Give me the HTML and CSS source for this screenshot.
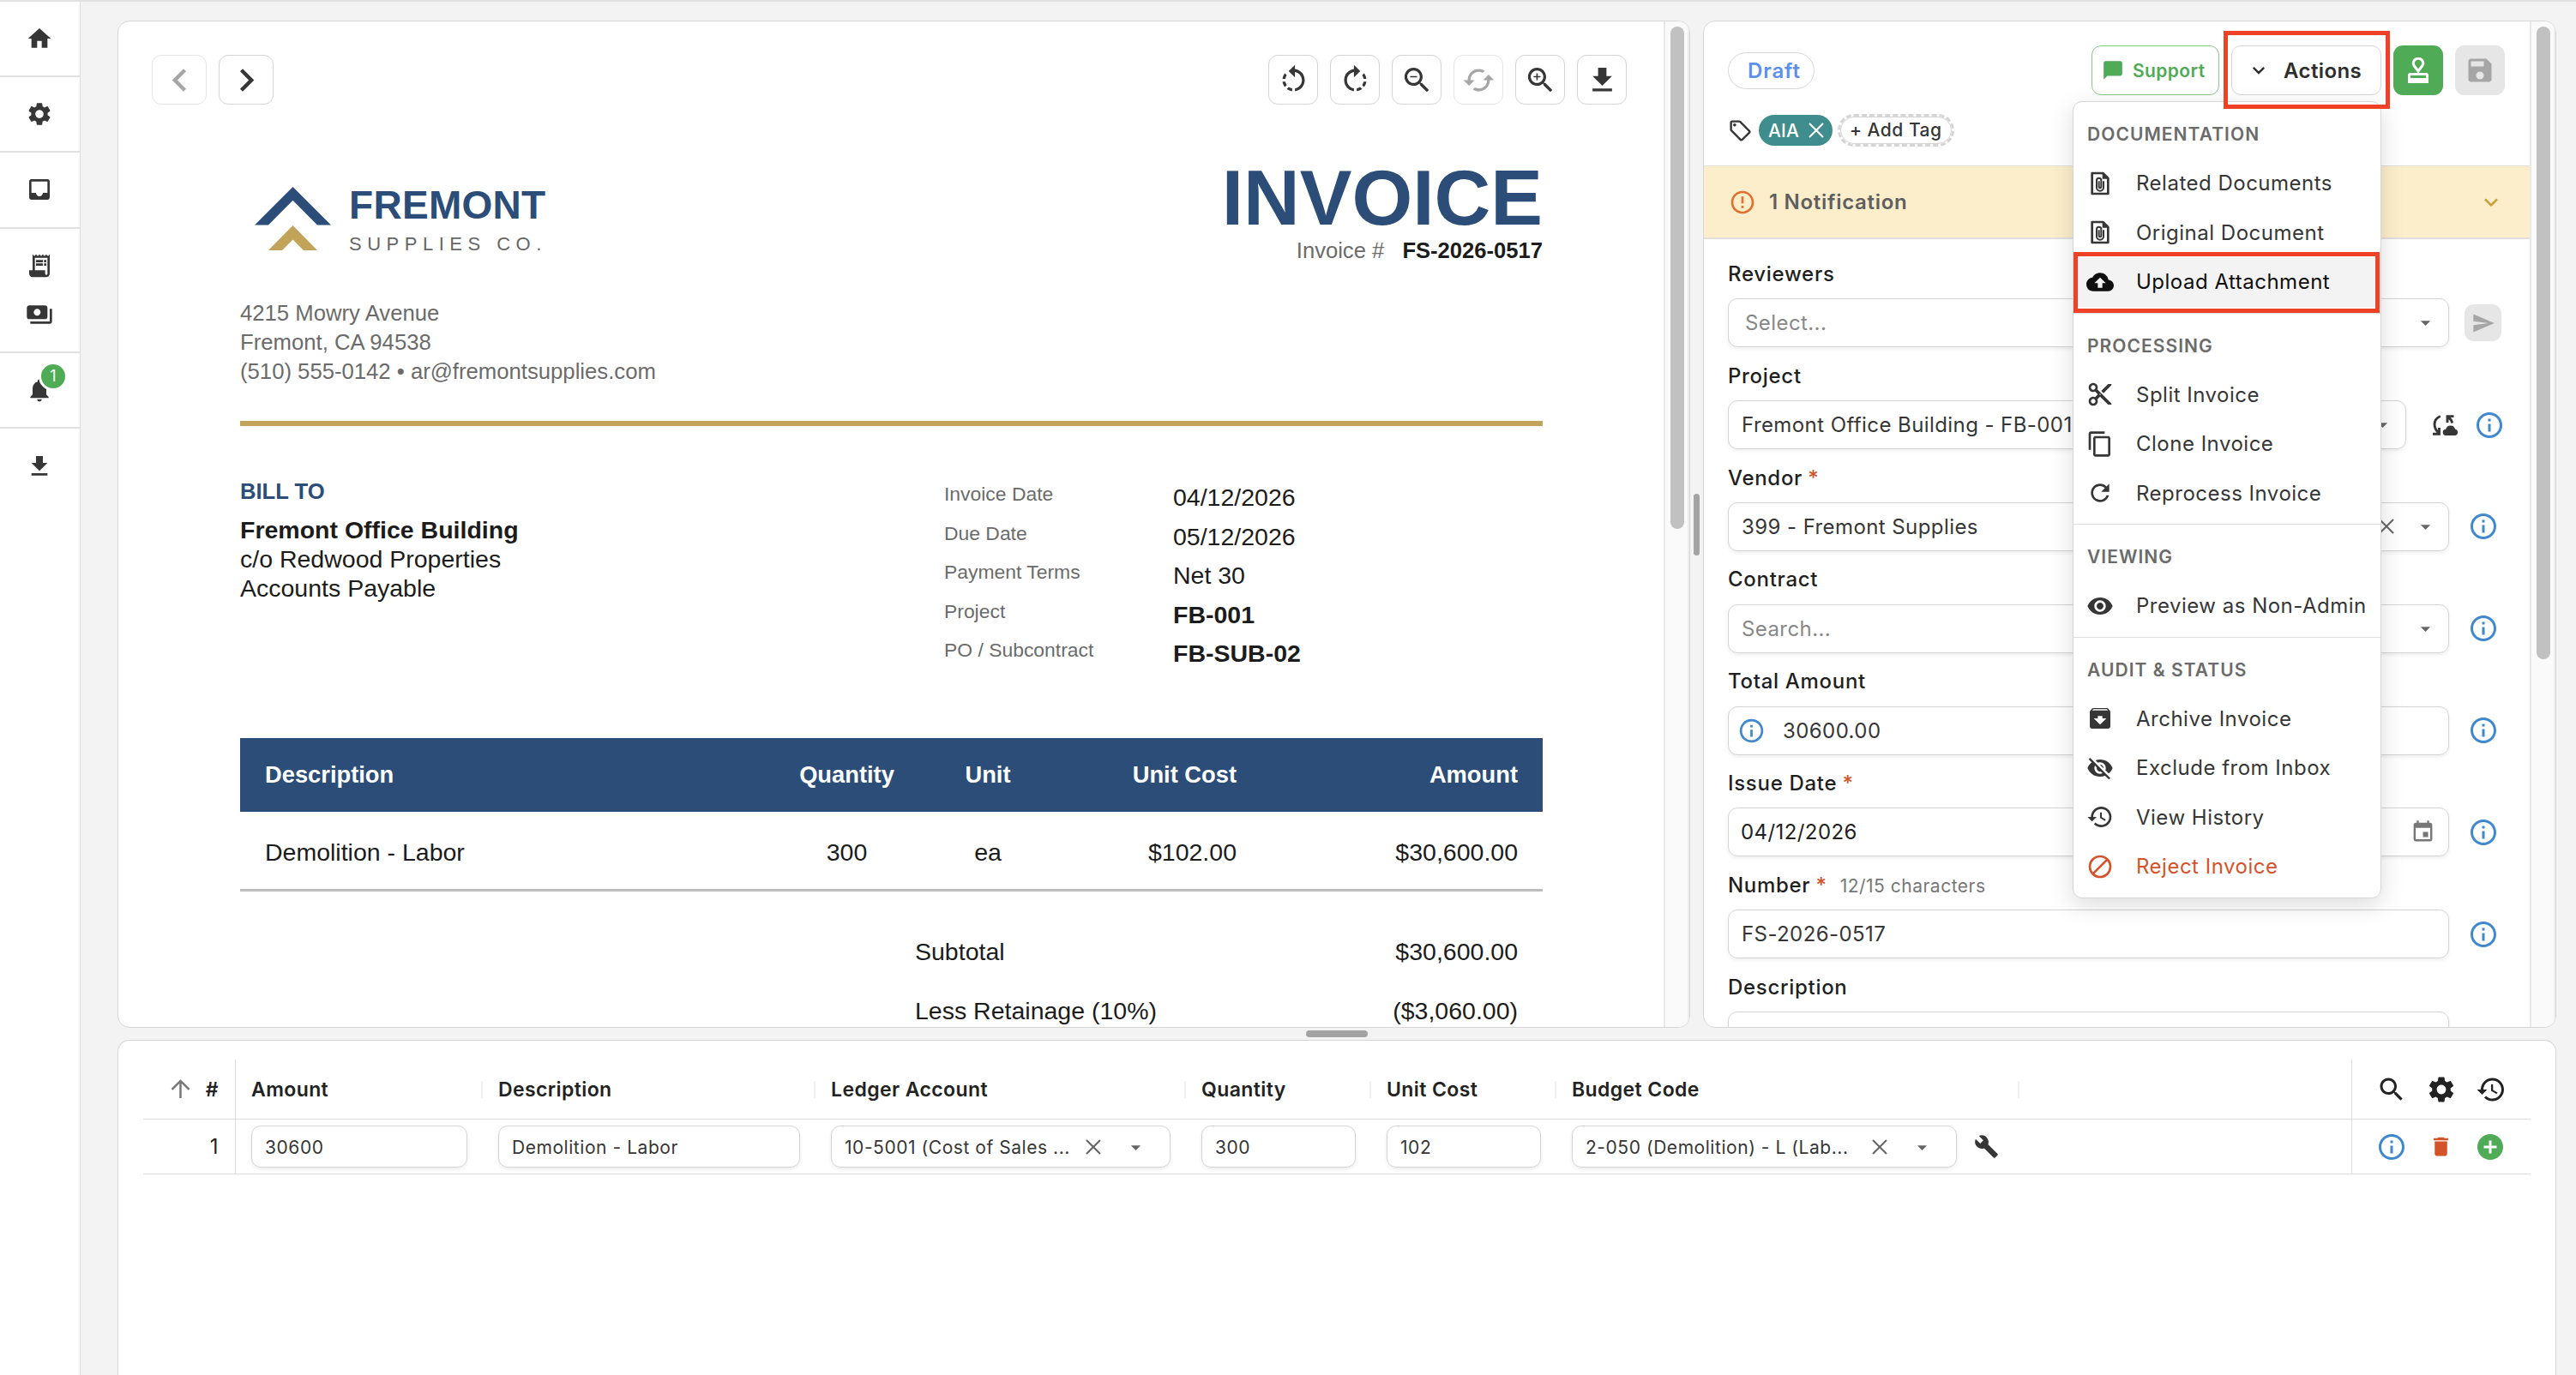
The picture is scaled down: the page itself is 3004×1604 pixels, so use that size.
FILE: index.html
```html
<!DOCTYPE html>
<html lang="en">
<head>
    <meta charset="UTF-8">
    <meta name="viewport" content="width=device-width, initial-scale=1.0">
    <title>Invoice FS-2026-0517</title>
    <link rel="stylesheet" href="styles.css">
</head>
<body>
    <!-- icon sprite -->
    <svg class="sprite" xmlns="http://www.w3.org/2000/svg">
        <symbol id="i-home" viewBox="0 0 24 24"><path d="M10 20v-6h4v6h5v-8h3L12 3 2 12h3v8z"/></symbol>
        <symbol id="i-gear" viewBox="0 0 24 24"><path d="M19.14 12.94c.04-.3.06-.61.06-.94 0-.32-.02-.64-.07-.94l2.03-1.58c.18-.14.23-.41.12-.61l-1.92-3.32c-.12-.22-.37-.29-.59-.22l-2.39.96c-.5-.38-1.03-.7-1.62-.94l-.36-2.54c-.04-.24-.24-.41-.48-.41h-3.84c-.24 0-.43.17-.47.41l-.36 2.54c-.59.24-1.13.57-1.62.94l-2.39-.96c-.22-.08-.47 0-.59.22L2.74 8.87c-.12.21-.08.47.12.61l2.03 1.58c-.05.3-.09.63-.09.94s.02.64.07.94l-2.03 1.58c-.18.14-.23.41-.12.61l1.92 3.32c.12.22.37.29.59.22l2.39-.96c.5.38 1.03.7 1.62.94l.36 2.54c.05.24.24.41.48.41h3.84c.24 0 .44-.17.47-.41l.36-2.54c.59-.24 1.13-.56 1.62-.94l2.39.96c.22.08.47 0 .59-.22l1.92-3.32c.12-.22.07-.47-.12-.61l-2.01-1.58zM12 15.6c-1.98 0-3.6-1.62-3.6-3.6s1.62-3.6 3.6-3.6 3.6 1.62 3.6 3.6-1.62 3.6-3.6 3.6z"/></symbol>
        <symbol id="i-inbox" viewBox="0 0 24 24"><path d="M19 3H4.99c-1.11 0-1.98.89-1.98 2L3 19c0 1.1.88 2 1.99 2H19c1.1 0 2-.9 2-2V5c0-1.11-.9-2-2-2zm0 12h-4c0 1.66-1.35 3-3 3s-3-1.34-3-3H4.99V5H19v10z"/></symbol>
        <symbol id="i-receipt" viewBox="0 0 24 24"><path d="M19.5 3.5 18 2l-1.5 1.5L15 2l-1.5 1.5L12 2l-1.5 1.5L9 2 7.5 3.5 6 2v14H3v3c0 1.66 1.34 3 3 3h12c1.66 0 3-1.34 3-3V2l-1.5 1.5zM19 19c0 .55-.45 1-1 1s-1-.45-1-1v-3H8V5h11v14z"/><path d="M9 7h6v2H9zM16 7h2v2h-2zM9 10h6v2H9zM16 10h2v2h-2z"/></symbol>
        <symbol id="i-payments" viewBox="0 0 24 24"><path d="M19 14V6c0-1.1-.9-2-2-2H3c-1.1 0-2 .9-2 2v8c0 1.1.9 2 2 2h14c1.1 0 2-.9 2-2zm-9-1c-1.66 0-3-1.34-3-3s1.34-3 3-3 3 1.34 3 3-1.34 3-3 3zm13-6v11c0 1.1-.9 2-2 2H4v-2h17V7h2z"/></symbol>
        <symbol id="i-bell" viewBox="0 0 24 24"><path d="M12 22c1.1 0 2-.9 2-2h-4c0 1.1.89 2 2 2zm6-6v-5c0-3.07-1.64-5.64-4.5-6.32V4c0-.83-.67-1.5-1.5-1.5s-1.5.67-1.5 1.5v.68C7.63 5.36 6 7.92 6 11v5l-2 2v1h16v-1l-2-2z"/></symbol>
        <symbol id="i-download" viewBox="0 0 24 24"><path d="M19 9h-4V3H9v6H5l7 7 7-7zM5 18v2h14v-2H5z"/></symbol>
        <symbol id="i-left" viewBox="0 0 24 24"><path d="M15.41 7.41 14 6l-6 6 6 6 1.41-1.41L10.83 12z"/></symbol>
        <symbol id="i-right" viewBox="0 0 24 24"><path d="M10 6 8.59 7.41 13.17 12l-4.58 4.59L10 18l6-6z"/></symbol>
        <symbol id="i-down" viewBox="0 0 24 24"><path d="M7.41 8.59 12 13.17l4.59-4.58L18 10l-6 6-6-6z"/></symbol>
        <symbol id="i-caret" viewBox="0 0 24 24"><path d="m7 10 5 5 5-5z"/></symbol>
        <symbol id="i-close" viewBox="0 0 24 24"><path d="M4 4l16 16M20 4L4 20" fill="none" stroke="currentColor" stroke-width="2.1"/></symbol>
        <symbol id="i-rot-left" viewBox="0 0 24 24"><path d="M7.11 8.53 5.7 7.11C4.8 8.27 4.24 9.61 4.07 11h2.02c.14-.87.49-1.72 1.02-2.47zM6.09 13H4.07c.17 1.39.72 2.73 1.62 3.89l1.41-1.42c-.52-.75-.87-1.59-1.01-2.47zm1.01 5.32c1.16.9 2.51 1.44 3.9 1.61V17.9c-.87-.15-1.71-.49-2.46-1.03L7.1 18.32zM13 4.07V1L8.45 5.55 13 10V6.09c2.84.48 5 2.94 5 5.91s-2.16 5.43-5 5.91v2.02c3.95-.49 7-3.85 7-7.93s-3.05-7.44-7-7.93z"/></symbol>
        <symbol id="i-rot-right" viewBox="0 0 24 24"><path d="M15.55 5.55 11 1v3.07C7.06 4.56 4 7.92 4 12s3.05 7.44 7 7.93v-2.02c-2.84-.48-5-2.94-5-5.91s2.16-5.43 5-5.91V10l4.55-4.45zM19.93 11c-.17-1.39-.72-2.73-1.62-3.89l-1.42 1.42c.54.75.88 1.6 1.02 2.47h2.02zM13 17.9v2.02c1.39-.17 2.74-.71 3.9-1.61l-1.44-1.44c-.75.54-1.59.89-2.46 1.03zm3.89-2.42 1.42 1.41c.9-1.16 1.45-2.5 1.62-3.89h-2.02c-.14.87-.48 1.72-1.02 2.48z"/></symbol>
        <symbol id="i-search" viewBox="0 0 24 24"><path d="M15.5 14h-.79l-.28-.27C15.41 12.59 16 11.11 16 9.5 16 5.91 13.09 3 9.5 3S3 5.91 3 9.5 5.91 16 9.5 16c1.61 0 3.09-.59 4.23-1.57l.27.28v.79l5 4.99L20.49 19l-4.99-5zm-6 0C7.01 14 5 11.99 5 9.5S7.01 5 9.5 5 14 7.01 14 9.5 11.99 14 9.5 14z"/></symbol>
        <symbol id="i-cached" viewBox="0 0 24 24"><path d="m19 8-4 4h3c0 3.31-2.69 6-6 6-1.01 0-1.97-.25-2.8-.7l-1.46 1.46C8.97 19.54 10.43 20 12 20c4.42 0 8-3.58 8-8h3l-4-4zM6 12c0-3.31 2.69-6 6-6 1.01 0 1.97.25 2.8.7l1.46-1.46C15.03 4.46 13.57 4 12 4c-4.42 0-8 3.58-8 8H1l4 4 4-4H6z"/></symbol>
        <symbol id="i-tag" viewBox="0 0 24 24"><path d="m21.41 11.58-9-9C12.05 2.22 11.55 2 11 2H4c-1.1 0-2 .9-2 2v7c0 .55.22 1.05.59 1.42l9 9c.36.36.86.58 1.41.58s1.05-.22 1.41-.59l7-7c.37-.36.59-.86.59-1.41s-.23-1.06-.59-1.42zM13 20.01 4 11V4h7v-.01l9 9-7 7.02z"/><circle cx="6.5" cy="6.5" r="1.5"/></symbol>
        <symbol id="i-error" viewBox="0 0 24 24"><path d="M11 15h2v2h-2zm0-8h2v6h-2zm.99-5C6.47 2 2 6.48 2 12s4.47 10 9.99 10C17.52 22 22 17.52 22 12S17.52 2 11.99 2zM12 20c-4.42 0-8-3.58-8-8s3.58-8 8-8 8 3.58 8 8-3.58 8-8 8z"/></symbol>
        <symbol id="i-info" viewBox="0 0 24 24"><path d="M11 7h2v2h-2zm0 4h2v6h-2zm1-9C6.48 2 2 6.48 2 12s4.48 10 10 10 10-4.48 10-10S17.52 2 12 2zm0 18c-4.41 0-8-3.59-8-8s3.59-8 8-8 8 3.59 8 8-3.59 8-8 8z"/></symbol>
        <symbol id="i-chat" viewBox="0 0 24 24"><path d="M20 2H4c-1.1 0-2 .9-2 2v18l4-4h14c1.1 0 2-.9 2-2V4c0-1.1-.9-2-2-2z"/></symbol>
        <symbol id="i-stamp" viewBox="0 0 24 30"><path d="M12 16.2C9.5 12 6.2 9.8 6.2 7a5.8 5.8 0 0 1 11.6 0c0 2.8-3.3 5-5.800 9.2z" fill="none" stroke="currentColor" stroke-width="3"/><path fill-rule="evenodd" d="M2.5 18h19A2.5 2.5 0 0 1 24 20.5V30H0v-9.5A2.5 2.5 0 0 1 2.5 18zM3 21v3h18v-3z"/></symbol>
        <symbol id="i-save" viewBox="0 0 24 24"><path d="M17 3H5c-1.11 0-2 .9-2 2v14c0 1.1.89 2 2 2h14c1.1 0 2-.9 2-2V7l-4-4zm-5 16c-1.66 0-3-1.34-3-3s1.34-3 3-3 3 1.34 3 3-1.34 3-3 3zm3-10H5V5h10v4z"/></symbol>
        <symbol id="i-send" viewBox="0 0 24 24"><path d="M2.01 21 23 12 2.01 3 2 10l15 2-15 2z"/></symbol>
        <symbol id="i-sync" viewBox="0 0 30 24"><path d="M8.8 1.5C4.5 3.4 2 6.8 2 11c0 4 1.8 7.3 5 10M0 22.3h7.5V15M17 9V1.6h7.5M18 2.5c2.4 1.8 4 3.8 4.600 7" fill="none" stroke="currentColor" stroke-width="2.9"/><path d="M15.5 24a3.6 3.6 0 0 1-.3-7.2 5.6 5.6 0 0 1 10.8-.2A3.8 3.8 0 0 1 26.2 24z"/></symbol>
        <symbol id="i-attach" viewBox="0 0 24 24"><path d="M5 3h9.500L19 7.500V21H5z" fill="none" stroke="currentColor" stroke-width="2" stroke-linejoin="round"/><path d="M14 2v6h6z"/><path d="M15 10v5.500a3 3 0 0 1-6 0V9.300a2 2 0 0 1 4 0V15a1 1 0 0 1-2 0v-5" fill="none" stroke="currentColor" stroke-width="1.5"/></symbol>
        <symbol id="i-cloud" viewBox="0 0 24 24"><path d="M19.35 10.04C18.67 6.59 15.64 4 12 4 9.11 4 6.6 5.64 5.35 8.04 2.34 8.36 0 10.91 0 14c0 3.31 2.69 6 6 6h13c2.76 0 5-2.24 5-5 0-2.64-2.05-4.78-4.65-4.96zM14 13v4h-4v-4H7l5-5 5 5h-3z"/></symbol>
        <symbol id="i-cut" viewBox="0 0 24 24"><path d="M9.64 7.64c.23-.5.36-1.05.36-1.64 0-2.21-1.79-4-4-4S2 3.79 2 6s1.79 4 4 4c.59 0 1.14-.13 1.64-.36L10 12l-2.36 2.36C7.14 14.13 6.59 14 6 14c-2.21 0-4 1.79-4 4s1.79 4 4 4 4-1.79 4-4c0-.59-.13-1.14-.36-1.64L12 14l7 7h3v-1L9.64 7.64zM6 8c-1.1 0-2-.89-2-2s.9-2 2-2 2 .89 2 2-.9 2-2 2zm0 12c-1.1 0-2-.89-2-2s.9-2 2-2 2 .89 2 2-.9 2-2 2zm6-7.5c-.28 0-.5-.22-.5-.5s.22-.5.5-.5.5.22.5.5-.22.5-.5.5zM19 3l-6 6 2 2 7-7V3z"/></symbol>
        <symbol id="i-copy" viewBox="0 0 24 24"><path d="M16 1H4c-1.1 0-2 .9-2 2v14h2V3h12V1zm3 4H8c-1.1 0-2 .9-2 2v14c0 1.1.9 2 2 2h11c1.1 0 2-.9 2-2V7c0-1.1-.9-2-2-2zm0 16H8V7h11v14z"/></symbol>
        <symbol id="i-refresh" viewBox="0 0 24 24"><path d="M17.65 6.35C16.2 4.9 14.21 4 12 4c-4.42 0-7.99 3.58-7.99 8s3.57 8 7.99 8c3.73 0 6.84-2.55 7.73-6h-2.08c-.82 2.33-3.04 4-5.65 4-3.31 0-6-2.69-6-6s2.69-6 6-6c1.66 0 3.14.69 4.22 1.78L13 11h7V4l-2.35 2.35z"/></symbol>
        <symbol id="i-eye" viewBox="0 0 24 24"><path d="M12 4.500C7 4.500 2.730 7.610 1 12c1.730 4.390 6 7.500 11 7.500s9.270-3.110 11-7.500c-1.730-4.390-6-7.500-11-7.500zM12 17c-2.760 0-5-2.240-5-5s2.240-5 5-5 5 2.240 5 5-2.240 5-5 5zm0-8c-1.660 0-3 1.340-3 3s1.340 3 3 3 3-1.340 3-3-1.340-3-3-3z"/></symbol>
        <symbol id="i-eye-off" viewBox="0 0 24 24"><path d="M12 7c2.76 0 5 2.24 5 5 0 .65-.13 1.26-.36 1.83l2.92 2.92c1.51-1.26 2.7-2.89 3.43-4.75-1.73-4.39-6-7.5-11-7.5-1.4 0-2.74.25-3.98.7l2.16 2.16C10.74 7.13 11.35 7 12 7zM2 4.27l2.28 2.28.46.46C3.08 8.3 1.78 10.02 1 12c1.73 4.39 6 7.5 11 7.5 1.55 0 3.03-.3 4.38-.84l.42.42L19.73 22 21 20.73 3.27 3 2 4.27zM7.53 9.8l1.55 1.55c-.05.21-.08.43-.08.65 0 1.66 1.34 3 3 3 .22 0 .44-.03.65-.08l1.55 1.55c-.67.33-1.41.53-2.2.53-2.76 0-5-2.24-5-5 0-.79.2-1.53.53-2.2zm4.31-.78 3.15 3.15.02-.16c0-1.66-1.34-3-3-3l-.17.01z"/></symbol>
        <symbol id="i-archive" viewBox="0 0 24 24"><path d="m20.54 5.23-1.39-1.68C18.88 3.21 18.47 3 18 3H6c-.47 0-.88.21-1.16.55L3.46 5.23C3.17 5.57 3 6.02 3 6.5V19c0 1.1.9 2 2 2h14c1.1 0 2-.9 2-2V6.5c0-.48-.17-.93-.46-1.27zM12 17.5 6.5 12H10v-2h4v2h3.5L12 17.5zM5.12 5l.81-1h12l.94 1H5.12z"/></symbol>
        <symbol id="i-history" viewBox="0 0 24 24"><path d="M13 3c-4.97 0-9 4.03-9 9H1l3.89 3.89.07.14L9 12H6c0-3.87 3.13-7 7-7s7 3.13 7 7-3.13 7-7 7c-1.93 0-3.68-.79-4.94-2.06l-1.42 1.42C8.27 19.99 10.51 21 13 21c4.97 0 9-4.03 9-9s-4.03-9-9-9zm-1 5v5l4.28 2.54.72-1.21-3.5-2.08V8H12z"/></symbol>
        <symbol id="i-block" viewBox="0 0 24 24"><path d="M5.500 18.500l13-13" stroke="currentColor" stroke-width="2"/><circle cx="12" cy="12" r="9" fill="none" stroke="currentColor" stroke-width="2"/></symbol>
        <symbol id="i-event" viewBox="0 0 24 24"><path d="M17 12h-5v5h5v-5zM16 1v2H8V1H6v2H5c-1.11 0-1.99.9-1.99 2L3 19c0 1.1.89 2 2 2h14c1.1 0 2-.9 2-2V5c0-1.1-.9-2-2-2h-1V1h-2zm3 18H5V8h14v11z"/></symbol>
        <symbol id="i-build" viewBox="0 0 24 24"><path d="m22.7 19-9.1-9.1c.9-2.3.4-5-1.5-6.9-2-2-5-2.4-7.4-1.3L9 6 6 9 1.6 4.7C.4 7.1.9 10.1 2.9 12.1c1.9 1.9 4.6 2.4 6.9 1.500l9.1 9.1c.4.4 1 .4 1.4 0l2.3-2.3c.5-.4.5-1.1.1-1.4z"/></symbol>
        <symbol id="i-trash" viewBox="0 0 24 24"><path d="M6 19c0 1.1.9 2 2 2h8c1.1 0 2-.9 2-2V7H6v12zM19 4h-3.5l-1-1h-5l-1 1H5v2h14V4z"/></symbol>
        <symbol id="i-add" viewBox="0 0 24 24"><path d="M12 2C6.48 2 2 6.48 2 12s4.48 10 10 10 10-4.48 10-10S17.52 2 12 2zm5 11h-4v4h-2v-4H7v-2h4V7h2v4h4v2z"/></symbol>
        <symbol id="i-up" viewBox="0 0 24 24"><path d="M12 23V2M1.500 12.500 12 2l10.500 10.500" fill="none" stroke="currentColor" stroke-width="2.6"/></symbol>
    </svg>

    <nav class="sidebar">
        <a class="nav-cell"><svg class="icon"><use href="#i-home"/></svg></a>
        <a class="nav-cell"><svg class="icon"><use href="#i-gear"/></svg></a>
        <a class="nav-cell"><svg class="icon"><use href="#i-inbox"/></svg></a>
        <div class="nav-cell nav-double">
            <svg class="icon"><use href="#i-receipt"/></svg>
            <svg class="icon"><use href="#i-payments"/></svg>
        </div>
        <a class="nav-cell"><svg class="icon"><use href="#i-bell"/></svg><span class="badge">1</span></a>
        <a class="nav-cell nav-last"><svg class="icon"><use href="#i-download"/></svg></a>
    </nav>

    <main class="main">
        <div class="top-row">
            <!-- document viewer -->
            <section class="card viewer">
                <div class="viewer-body">
                    <div class="toolbar">
                        <button class="tool wide disabled"><svg class="icon big"><use href="#i-left"/></svg></button>
                        <button class="tool wide"><svg class="icon big"><use href="#i-right"/></svg></button>
                        <span class="spacer"></span>
                        <button class="tool"><svg class="icon"><use href="#i-rot-left"/></svg></button>
                        <button class="tool"><svg class="icon"><use href="#i-rot-right"/></svg></button>
                        <button class="tool"><svg class="icon" viewBox="0 0 24 24"><use href="#i-search"/><path d="M7 9h5v1H7z"/></svg></button>
                        <button class="tool disabled"><svg class="icon"><use href="#i-cached"/></svg></button>
                        <button class="tool"><svg class="icon" viewBox="0 0 24 24"><use href="#i-search"/><path d="M12 10h-2v2H9v-2H7V9h2V7h1v2h2z"/></svg></button>
                        <button class="tool"><svg class="icon"><use href="#i-download"/></svg></button>
                    </div>

                    <article class="invoice">
                        <header class="inv-head">
                            <div class="brand">
                                <svg class="logo" viewBox="0 0 89 74"><path d="M0 44.5 44.5 0 89 44.5H73L44.5 15.700 16 44.5z" fill="#2b4d77"/><path d="M16 74 44.5 45 73 74H57L44.5 61.5 32 74z" fill="#c2a35a"/></svg>
                                <div>
                                    <div class="brand-name">FREMONT</div>
                                    <div class="brand-sub">SUPPLIES CO.</div>
                                </div>
                            </div>
                            <div class="inv-title">
                                <h1>INVOICE</h1>
                                <p>Invoice # <b>FS-2026-0517</b></p>
                            </div>
                        </header>
                        <address>4215 Mowry Avenue<br>Fremont, CA 94538<br>(510) 555-0142 • ar@fremontsupplies.com</address>
                        <hr class="gold">
                        <div class="inv-info">
                            <div class="bill-to">
                                <h2>BILL TO</h2>
                                <p><b>Fremont Office Building</b><br>c/o Redwood Properties<br>Accounts Payable</p>
                            </div>
                            <dl class="meta">
                                <dt>Invoice Date</dt><dd>04/12/2026</dd>
                                <dt>Due Date</dt><dd>05/12/2026</dd>
                                <dt>Payment Terms</dt><dd>Net 30</dd>
                                <dt>Project</dt><dd><b>FB-001</b></dd>
                                <dt>PO / Subcontract</dt><dd><b>FB-SUB-02</b></dd>
                            </dl>
                        </div>
                        <div class="inv-row inv-row-head">
                            <span>Description</span><span>Quantity</span><span>Unit</span><span>Unit Cost</span><span>Amount</span>
                        </div>
                        <div class="inv-row inv-row-item">
                            <span>Demolition - Labor</span><span>300</span><span>ea</span><span>$102.00</span><span>$30,600.00</span>
                        </div>
                        <div class="totals">
                            <div><span>Subtotal</span><span>$30,600.00</span></div>
                            <div><span>Less Retainage (10%)</span><span>($3,060.00)</span></div>
                        </div>
                    </article>
                </div>
                <div class="scrollbar"><div class="thumb thumb-doc"></div></div>
            </section>

            <div class="splitter-v"><span></span></div>

            <!-- invoice details -->
            <section class="card details">
                <div class="details-body">
                    <header class="details-head">
                        <div class="head-row">
                            <span class="status">Draft</span>
                            <span class="spacer"></span>
                            <button class="btn btn-support"><svg class="icon"><use href="#i-chat"/></svg>Support</button>
                            <div class="actions">
                                <button class="btn btn-actions"><svg class="icon"><use href="#i-down"/></svg>Actions</button>
                                <div class="menu">
                                    <div class="menu-group">
                                        <h3>DOCUMENTATION</h3>
                                        <a><svg class="icon"><use href="#i-attach"/></svg>Related Documents</a>
                                        <a><svg class="icon"><use href="#i-attach"/></svg>Original Document</a>
                                        <a class="hover"><svg class="icon"><use href="#i-cloud"/></svg>Upload Attachment<span class="mark mark-item"></span></a>
                                    </div>
                                    <div class="menu-group">
                                        <h3>PROCESSING</h3>
                                        <a><svg class="icon"><use href="#i-cut"/></svg>Split Invoice</a>
                                        <a><svg class="icon"><use href="#i-copy"/></svg>Clone Invoice</a>
                                        <a><svg class="icon"><use href="#i-refresh"/></svg>Reprocess Invoice</a>
                                    </div>
                                    <div class="menu-group">
                                        <h3>VIEWING</h3>
                                        <a><svg class="icon"><use href="#i-eye"/></svg>Preview as Non-Admin</a>
                                    </div>
                                    <div class="menu-group">
                                        <h3>AUDIT &amp; STATUS</h3>
                                        <a><svg class="icon"><use href="#i-archive"/></svg>Archive Invoice</a>
                                        <a><svg class="icon"><use href="#i-eye-off"/></svg>Exclude from Inbox</a>
                                        <a><svg class="icon"><use href="#i-history"/></svg>View History</a>
                                        <a class="danger"><svg class="icon"><use href="#i-block"/></svg>Reject Invoice</a>
                                    </div>
                                </div>
                                <span class="mark mark-button"></span>
                            </div>
                            <button class="btn-square green"><svg class="icon stamp"><use href="#i-stamp"/></svg></button>
                            <button class="btn-square grey"><svg class="icon"><use href="#i-save"/></svg></button>
                        </div>
                        <div class="tag-row">
                            <svg class="icon"><use href="#i-tag"/></svg>
                            <span class="tag">AIA<svg class="icon"><use href="#i-close"/></svg></span>
                            <span class="add-tag"><span>+ Add Tag</span></span>
                        </div>
                    </header>

                    <div class="notice">
                        <svg class="icon"><use href="#i-error"/></svg>
                        <span>1 Notification</span>
                        <svg class="icon notice-chev"><use href="#i-down"/></svg>
                    </div>

                    <form class="form">
                        <div class="group">
                            <label>Reviewers</label>
                            <div class="line">
                                <div class="field placeholder pad">Select...<svg class="icon caret"><use href="#i-caret"/></svg></div>
                                <span class="send"><svg class="icon"><use href="#i-send"/></svg></span>
                            </div>
                        </div>
                        <div class="group">
                            <label>Project</label>
                            <div class="line line-project">
                                <div class="field">Fremont Office Building - FB-001<svg class="icon caret"><use href="#i-caret"/></svg></div>
                                <svg class="sync"><use href="#i-sync"/></svg>
                                <svg class="icon info"><use href="#i-info"/></svg>
                            </div>
                        </div>
                        <div class="group">
                            <label>Vendor <i>*</i></label>
                            <div class="line">
                                <div class="field">399 - Fremont Supplies<svg class="icon clear"><use href="#i-close"/></svg><svg class="icon caret"><use href="#i-caret"/></svg></div>
                                <svg class="icon info"><use href="#i-info"/></svg>
                            </div>
                        </div>
                        <div class="group">
                            <label>Contract</label>
                            <div class="line">
                                <div class="field placeholder">Search...<svg class="icon caret"><use href="#i-caret"/></svg></div>
                                <svg class="icon info"><use href="#i-info"/></svg>
                            </div>
                        </div>
                        <div class="group">
                            <label>Total Amount</label>
                            <div class="line">
                                <div class="field"><svg class="icon inner-info"><use href="#i-info"/></svg>30600.00</div>
                                <svg class="icon info"><use href="#i-info"/></svg>
                            </div>
                        </div>
                        <div class="group">
                            <label>Issue Date <i>*</i></label>
                            <div class="line">
                                <div class="field date">04/12/2026<svg class="icon calendar"><use href="#i-event"/></svg></div>
                                <svg class="icon info"><use href="#i-info"/></svg>
                            </div>
                        </div>
                        <div class="group">
                            <label>Number <i>*</i><small>12/15 characters</small></label>
                            <div class="line">
                                <div class="field">FS-2026-0517</div>
                                <svg class="icon info"><use href="#i-info"/></svg>
                            </div>
                        </div>
                        <div class="group">
                            <label>Description</label>
                            <div class="line"><div class="field"></div></div>
                        </div>
                    </form>
                </div>
                <div class="scrollbar"><div class="thumb thumb-form"></div></div>
            </section>
        </div>

        <div class="splitter-h"><span></span></div>

        <!-- line items -->
        <section class="card items">
            <div class="grid-row grid-head">
                <div class="cell num"><svg class="icon"><use href="#i-up"/></svg>#</div>
                <div class="cell"><span>Amount</span></div>
                <div class="cell"><span>Description</span></div>
                <div class="cell"><span>Ledger Account</span></div>
                <div class="cell"><span>Quantity</span></div>
                <div class="cell"><span>Unit Cost</span></div>
                <div class="cell"><span>Budget Code</span></div>
                <div class="tools">
                    <svg class="icon"><use href="#i-search"/></svg>
                    <svg class="icon"><use href="#i-gear"/></svg>
                    <svg class="icon"><use href="#i-history"/></svg>
                </div>
            </div>
            <div class="grid-row">
                <div class="cell num">1</div>
                <div class="cell"><div class="input">30600</div></div>
                <div class="cell"><div class="input">Demolition - Labor</div></div>
                <div class="cell"><div class="input">10-5001 (Cost of Sales ...<svg class="icon clear"><use href="#i-close"/></svg><svg class="icon caret"><use href="#i-caret"/></svg></div></div>
                <div class="cell"><div class="input">300</div></div>
                <div class="cell"><div class="input">102</div></div>
                <div class="cell budget"><div class="input">2-050 (Demolition) - L (Lab...<svg class="icon clear"><use href="#i-close"/></svg><svg class="icon caret"><use href="#i-caret"/></svg></div><svg class="icon wrench"><use href="#i-build"/></svg></div>
                <div class="tools">
                    <svg class="icon blue"><use href="#i-info"/></svg>
                    <svg class="icon red"><use href="#i-trash"/></svg>
                    <svg class="icon grn"><use href="#i-add"/></svg>
                </div>
            </div>
        </section>
    </main>
</body>
</html>
```

FILE: styles.css
```css
* {
    box-sizing: border-box;
}
body {
    margin: 0;
    height: 100vh;
    display: flex;
    overflow: hidden;
    border-top: 2px solid #e2e2e2;
    background-color: #f3f3f3;
    color: #363636;
    font-family: Inter, "Liberation Sans", sans-serif;
    font-size: 24px;
    letter-spacing: 0.5px;
}
button {
    font: inherit;
    letter-spacing: inherit;
    padding: 0;
    background: #fff;
}
.sprite {
    position: absolute;
    width: 0;
    height: 0;
}
.icon {
    flex: none;
    width: 32px;
    height: 32px;
    fill: currentColor;
}
.spacer {
    flex: 1;
}

/* sidebar */
.sidebar {
    flex: none;
    width: 94px;
    background-color: #fff;
    border-right: 1px solid #dcdcdc;
}
.nav-cell {
    position: relative;
    display: flex;
    align-items: center;
    justify-content: center;
    height: 88.5px;
    padding-right: 1px;
    border-bottom: 2px solid #e0e0e0;
}
.nav-cell:first-child {
    height: 87.5px;
}
.nav-double {
    flex-direction: column;
    gap: 25px;
    height: 145px;
}
.nav-last {
    height: 87px;
    border-bottom: none;
}
.badge {
    position: absolute;
    left: 45px;
    top: 10px;
    width: 34px;
    height: 34px;
    border: 3px solid #fff;
    border-radius: 50%;
    background-color: #4fab55;
    color: #fff;
    font-size: 18px;
    line-height: 28px;
    text-align: center;
    letter-spacing: 0;
}

/* layout */
.main {
    flex: 1;
    min-width: 0;
    display: flex;
    flex-direction: column;
    padding: 22px 23px 0 43px;
}
.card {
    background-color: #fff;
    border: 1px solid #d6d6d6;
    border-radius: 14px;
    overflow: hidden;
}
.top-row {
    flex: none;
    display: flex;
    height: 1175px;
}
.viewer {
    flex: 1;
    min-width: 0;
    display: flex;
}
.details {
    flex: none;
    width: 995px;
    display: flex;
}
.splitter-v {
    flex: none;
    width: 15px;
    display: flex;
    align-items: center;
    padding-left: 4px;
}
.splitter-v span {
    width: 7px;
    height: 72px;
    border-radius: 4px;
    background-color: #a3a3a3;
}
.splitter-h {
    flex: none;
    height: 14px;
    display: flex;
    justify-content: center;
    padding-top: 3px;
}
.splitter-h span {
    width: 72px;
    height: 8px;
    border-radius: 4px;
    background-color: #a3a3a3;
}
.scrollbar {
    flex: none;
    width: 30px;
    padding: 6px 4px 0 6px;
    background-color: #fafafa;
    border-left: 2px solid #e8e8e8;
    border-right: 2px solid #ededed;
}
.thumb {
    width: 16px;
    border-radius: 8px;
    background-color: #c1c1c1;
}
.thumb-doc {
    height: 586px;
}
.thumb-form {
    height: 738px;
}

/* viewer */
.viewer-body {
    flex: 1;
    min-width: 0;
    padding-top: 39px;
}
.toolbar {
    display: flex;
    gap: 14px;
    padding: 0 43px 0 39px;
}
.tool {
    display: flex;
    align-items: center;
    justify-content: center;
    width: 58px;
    height: 58px;
    border: 1px solid #d4d4d4;
    border-radius: 11px;
    color: #363636;
}
.tool.wide {
    width: 64px;
}
.tool .icon {
    width: 39px;
    height: 39px;
}
.tool .icon.big {
    width: 53px;
    height: 53px;
}
.tool.disabled {
    color: #a6a6a6;
    border-color: #e6e6e6;
}

/* invoice document */
.invoice {
    width: 1519px;
    margin: 63px 0 0 142px;
    font-family: "Liberation Sans", Arial, sans-serif;
    font-size: 28.5px;
    letter-spacing: 0;
    color: #1c1c1c;
}
.inv-head {
    display: flex;
    justify-content: space-between;
}
.brand {
    display: flex;
    gap: 21px;
    padding: 30px 0 0 17px;
}
.logo {
    width: 89px;
    height: 74px;
    margin-top: 3px;
}
.brand-name {
    margin-top: 1px;
    font-size: 46px;
    line-height: 46px;
    font-weight: bold;
    letter-spacing: 0.3px;
    color: #2b4d77;
}
.brand-sub {
    margin-top: 8px;
    font-size: 22px;
    line-height: 30px;
    letter-spacing: 6.5px;
    color: #666;
}
.inv-title {
    text-align: right;
}
.inv-title h1 {
    margin: 0;
    font-size: 91px;
    line-height: 92px;
    color: #2b4d77;
}
.inv-title p {
    margin: 0;
    font-size: 25.6px;
    line-height: 30px;
    color: #6b6b6b;
}
.inv-title b {
    margin-left: 14px;
    color: #1c1c1c;
}
address {
    margin-top: 41px;
    font-style: normal;
    font-size: 25.7px;
    line-height: 34.2px;
    color: #6b6b6b;
}
.gold {
    height: 6px;
    margin: 40px 0 59px;
    border: none;
    background-color: #c2a35a;
}
.inv-info {
    display: flex;
    justify-content: space-between;
    height: 305px;
}
.bill-to h2 {
    margin: 0;
    font-size: 25.6px;
    line-height: 34px;
    color: #2b4d77;
}
.bill-to p {
    margin: 11px 0 0;
    line-height: 34.3px;
}
.meta {
    display: grid;
    grid-template-columns: 267px 431px;
    grid-auto-rows: 45.6px;
    align-content: start;
    align-items: center;
    margin: 2px 0 0;
}
.meta dt {
    padding-bottom: 8px;
    font-size: 22.9px;
    color: #6b6b6b;
}
.meta dd {
    margin: 0;
}
.inv-row {
    display: grid;
    grid-template-columns: 591px 175px 154px 213px 328px;
    align-items: center;
    padding: 0 29px;
}
.inv-row span:nth-child(2),
.inv-row span:nth-child(3) {
    text-align: center;
}
.inv-row span:nth-child(4),
.inv-row span:nth-child(5) {
    text-align: right;
}
.inv-row-head {
    height: 86px;
    background-color: #2b4d77;
    color: #fff;
    font-size: 27.3px;
    font-weight: bold;
}
.inv-row-item {
    height: 93px;
    padding-top: 5px;
    border-bottom: 3px solid #bdbdbd;
}
.totals {
    margin: 37px 29px 0 787px;
}
.totals div {
    display: flex;
    justify-content: space-between;
    align-items: center;
    height: 68.6px;
}

/* details panel */
.details-body {
    flex: 1;
    min-width: 0;
}
.details-head {
    height: 168px;
    padding: 28px 29px 0 28px;
}
.head-row {
    display: flex;
    align-items: center;
    gap: 14px;
    height: 58px;
}
.status {
    height: 43px;
    padding: 0 15px 0 22px;
    border: 1px solid #d6d6d6;
    border-radius: 22px;
    line-height: 41px;
    font-weight: 600;
    letter-spacing: 0.9px;
    color: #5b90ec;
}
.btn {
    display: flex;
    align-items: center;
    height: 58px;
    border: 1px solid #d6d6d6;
    border-radius: 11px;
    font-weight: 600;
}
.btn-support {
    width: 149px;
    padding-left: 11px;
    gap: 10px;
    border-color: #86c98a;
    color: #4fab55;
    font-size: 21px;
    letter-spacing: 0.4px;
}
.btn-support .icon {
    width: 26px;
    height: 26px;
}
.btn-actions {
    width: 175px;
    padding-left: 17px;
    gap: 15px;
    color: #2e2e2e;
    letter-spacing: 0.4px;
}
.btn-actions .icon {
    width: 28px;
    height: 28px;
}
.actions {
    position: relative;
}
.btn-square {
    display: flex;
    align-items: center;
    justify-content: center;
    width: 58px;
    height: 58px;
    border: none;
    border-radius: 11px;
}
.btn-square.green {
    background-color: #4fab55;
    color: #fff;
}
.btn-square.grey {
    background-color: #e6e6e6;
    color: #a6a6a6;
}
.btn-square .icon {
    width: 36px;
    height: 36px;
}
.btn-square .icon.stamp {
    width: 24px;
    height: 30px;
}
.tag-row {
    display: flex;
    align-items: center;
    height: 38px;
    margin-top: 22px;
    font-size: 21px;
    font-weight: 500;
}
.tag-row > .icon {
    width: 29px;
    height: 29px;
}
.tag {
    display: flex;
    align-items: center;
    gap: 8px;
    width: 86px;
    height: 36px;
    margin-left: 7px;
    padding-left: 11px;
    border-radius: 18px;
    background-color: #408d8d;
    color: #fff;
    letter-spacing: 0.2px;
}
.tag .icon {
    width: 24px;
    height: 24px;
}
.add-tag {
    margin-left: 6px;
    border: 3px dashed #d5d5d5;
    border-radius: 19px;
}
.add-tag span {
    display: block;
    height: 32px;
    padding: 0 10px;
    border: 1px solid #d5d5d5;
    border-radius: 16px;
    line-height: 30px;
}

/* actions menu */
.menu {
    position: absolute;
    z-index: 2;
    right: 0;
    top: 65px;
    width: 360px;
    border: 1px solid #d6d6d6;
    border-radius: 11px;
    background-color: #fff;
    box-shadow: 0 8px 28px rgba(0, 0, 0, 0.14);
}
.menu-group {
    padding: 9px 0 7px;
    border-bottom: 1px solid #dedede;
}
.menu-group:last-child {
    border-bottom: none;
}
.menu h3 {
    margin: 0;
    padding-left: 16px;
    font-size: 21px;
    line-height: 57px;
    font-weight: 600;
    letter-spacing: 1.05px;
    color: #6b6b6b;
}
.menu a {
    position: relative;
    display: flex;
    align-items: center;
    gap: 26px;
    height: 57.5px;
    padding-left: 15px;
    white-space: nowrap;
}
.menu a.danger {
    color: #d5532b;
}
.menu a.hover {
    background-color: #f3f3f3;
    color: #0f0f0f;
}
/* red call-out frames */
.mark {
    position: absolute;
    z-index: 3;
    border: 5px solid #ee4125;
}
.mark-button {
    left: -9px;
    top: -17px;
    width: 194px;
    height: 91px;
}
.mark-item {
    left: 0;
    right: 1px;
    top: -6px;
    bottom: -7px;
}

/* notification strip */
.notice {
    display: flex;
    align-items: center;
    height: 86px;
    padding: 0 29px 0 29px;
    border-top: 1px solid #dedede;
    border-bottom: 2px solid #e0e0e0;
    background-color: #fdeecb;
}
.notice > .icon:first-child {
    color: #e0702a;
}
.notice span {
    flex: 1;
    margin-left: 15px;
    font-weight: 600;
    letter-spacing: 0.7px;
    color: #5f5f5f;
}
.notice .notice-chev {
    color: #c9a03c;
}

/* form */
.form {
    padding: 25px 0 0 28px;
}
.group {
    height: 118.8px;
}
.group label {
    display: block;
    height: 44.4px;
    padding-top: 1px;
    line-height: 30px;
    font-weight: 500;
    letter-spacing: 0.7px;
    color: #1f1f1f;
}
.group label i {
    margin-left: -1px;
    font-style: normal;
    color: #d5532b;
}
.group small {
    margin-left: 15px;
    font-size: 21px;
    font-weight: 400;
    letter-spacing: 0.5px;
    color: #777;
}
.line {
    display: flex;
    align-items: center;
}
.field {
    display: flex;
    align-items: center;
    width: 841px;
    height: 57px;
    padding: 0 9px 0 15px;
    border: 1px solid #d4d4d4;
    border-radius: 11px;
    box-shadow: 0 2px 4px rgba(0, 0, 0, 0.07);
    letter-spacing: 0.42px;
}
.field.pad {
    padding-left: 19px;
}
.field.date {
    padding-left: 14px;
    color: #222;
}
.line-project .field {
    width: 791px;
}
.field.placeholder {
    color: #888;
}
.caret {
    width: 27px;
    height: 27px;
    color: #666;
}
.field .caret {
    margin-left: auto;
    margin-right: 4px;
}
.clear {
    width: 24px;
    height: 24px;
    color: #666;
}
.field .clear {
    margin-left: auto;
    margin-right: 20px;
}
.field .clear + .caret {
    margin-left: 0;
}
.inner-info {
    width: 33px;
    height: 33px;
    margin: 0 20px 0 -5px;
    color: #3f87cf;
}
.calendar {
    width: 29px;
    height: 29px;
    margin-left: auto;
    margin-right: 6px;
    color: #777;
}
.info {
    width: 36px;
    height: 36px;
    margin-left: 22px;
    color: #3f87cf;
}
.sync {
    width: 30px;
    height: 24px;
    margin-left: 31px;
    fill: currentColor;
}
.sync + .info {
    margin-left: 18px;
}
.send {
    display: flex;
    align-items: center;
    justify-content: center;
    width: 43px;
    height: 43px;
    margin-left: 18px;
    border-radius: 11px;
    background-color: #e6e6e6;
    color: #a6a6a6;
}
.send .icon {
    width: 28px;
    height: 28px;
}

/* line items grid */
.items {
    flex: 1;
    padding: 22px 29px 0;
    border-bottom: none;
    border-radius: 14px 14px 0 0;
}
.grid-row {
    display: grid;
    grid-template-columns: 108px 288px 388px 432px 216px 216px 1fr 209px;
    align-items: center;
    height: 64px;
    border-bottom: 1px solid #dedede;
}
.grid-head {
    height: 70px;
    font-size: 23px;
    font-weight: 600;
    letter-spacing: 0.4px;
    color: #222;
}
.cell {
    display: flex;
    align-items: center;
    padding: 0 18px;
}
.grid-head .cell {
    height: 20px;
    border-right: 2px solid #efefef;
}
.grid-head .cell:nth-child(7) {
    width: 540px;
}
.grid-row .cell.num {
    height: 100%;
    justify-content: flex-end;
    gap: 18px;
    padding-right: 19px;
    border-right: 1px solid #dedede;
    color: #222;
}
.num .icon {
    width: 23px;
    height: 23px;
    color: #777;
}
.input {
    display: flex;
    align-items: center;
    width: 100%;
    height: 49px;
    padding: 1px 15px 0;
    border: 1px solid #d4d4d4;
    border-radius: 11px;
    box-shadow: 0 2px 4px rgba(0, 0, 0, 0.08);
    font-size: 21px;
    letter-spacing: 0.55px;
}
.input .clear {
    margin-left: auto;
}
.input .caret {
    margin: 0 11px 0 24px;
}
.budget .input {
    width: 449px;
}
.wrench {
    width: 29px;
    height: 29px;
    margin-left: 20px;
}
.tools {
    display: flex;
    align-items: center;
    gap: 22px;
    height: 100%;
    padding-left: 28px;
    border-left: 1px solid #dedede;
}
.tools .icon {
    width: 36px;
    height: 36px;
}
.tools .red {
    width: 29px;
    height: 29px;
    margin: 0 3px;
}
.blue {
    color: #3f87cf;
}
.red {
    color: #d5532b;
}
.grn {
    color: #4fab55;
}
```
